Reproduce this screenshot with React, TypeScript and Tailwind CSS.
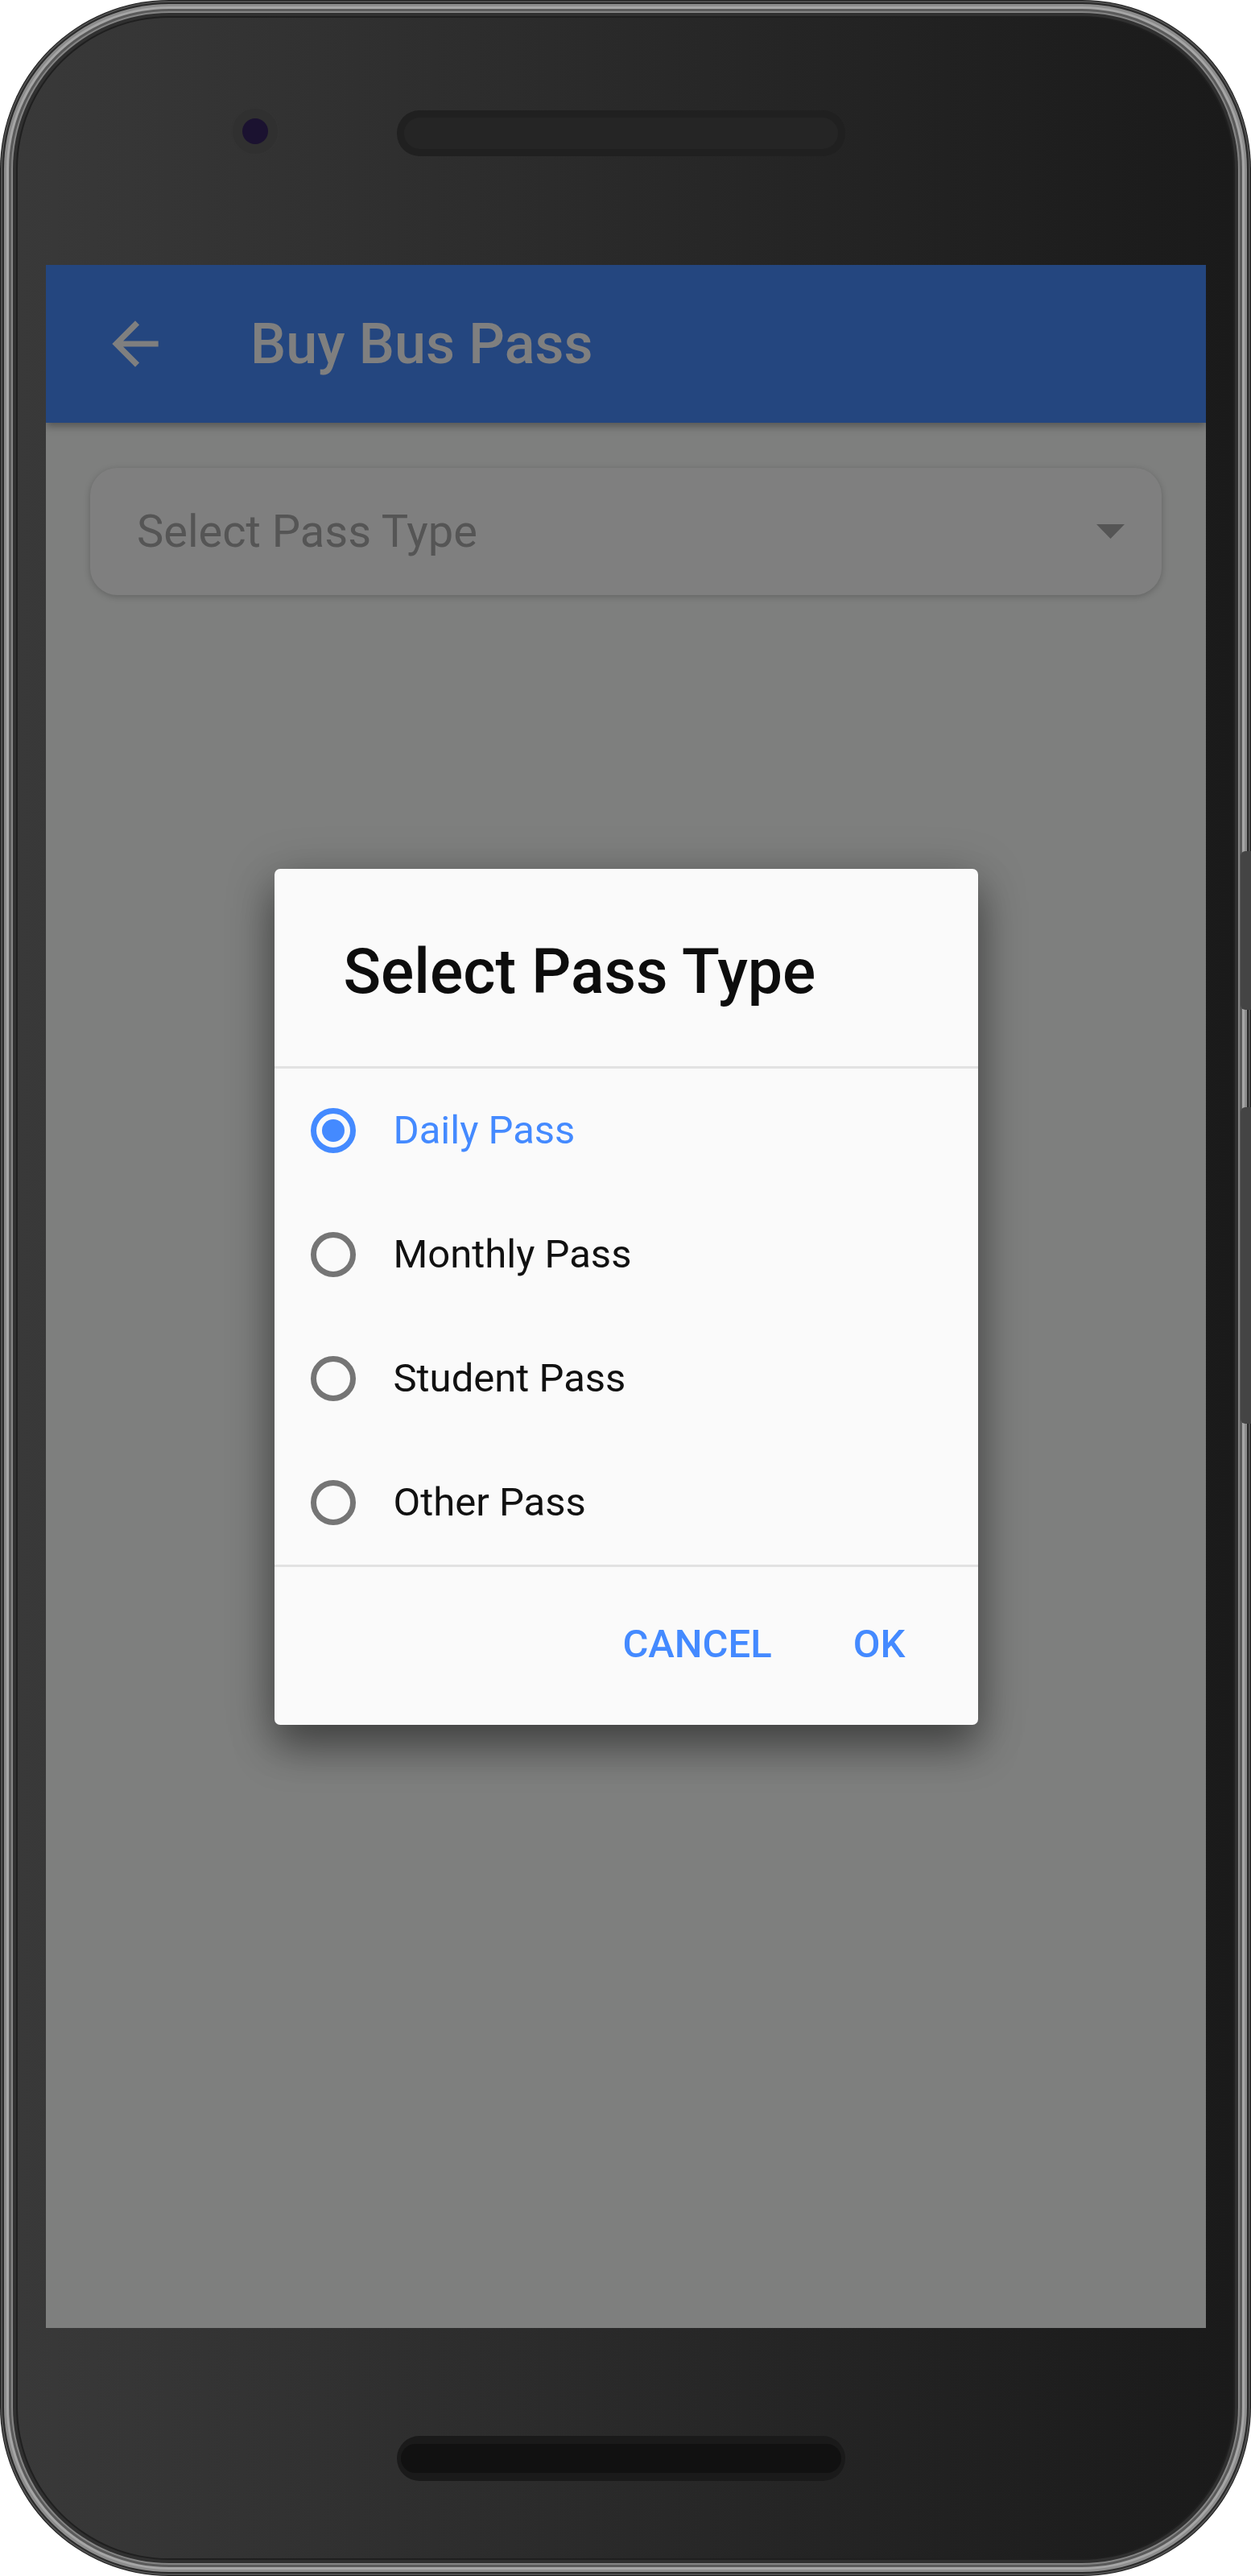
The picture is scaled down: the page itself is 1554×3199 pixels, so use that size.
import React from "react";

const passes = ["Daily Pass", "Monthly Pass", "Student Pass", "Other Pass"];

function Radio({ checked }: { checked: boolean }) {
  return (
    <div
      className={
        checked
          ? "w-[56px] h-[56px] rounded-full border-[7px] border-[#448aff] flex items-center justify-center shrink-0"
          : "w-[56px] h-[56px] rounded-full border-[7px] border-[#757575] flex items-center justify-center shrink-0"
      }
    >
      {checked ? <div className="w-[28px] h-[28px] rounded-full bg-[#448aff]" /> : null}
    </div>
  );
}

function Dialog() {
  return (
    <div className="w-[874px] h-[1063px] bg-[#fafafa] rounded-[7px] flex flex-col shadow-[0_30px_50px_rgba(0,0,0,0.35),0_10px_60px_rgba(0,0,0,0.25)] overflow-hidden">
      <div className="h-[245px] shrink-0 pl-[86px] pt-[90px]">
        <div className="text-[77px] leading-none font-medium text-[#0d0d0d]">Select Pass Type</div>
      </div>
      <div className="h-[3px] bg-[#e2e2e2] shrink-0" />
      <div className="flex flex-col shrink-0">
        {passes.map((p, i) => (
          <div key={p} className="h-[154px] flex items-center pl-[45px]">
            <Radio checked={i === 0} />
            <span
              className={
                i === 0
                  ? "ml-[47px] text-[49px] leading-none text-[#448aff]"
                  : "ml-[47px] text-[49px] leading-none text-[#111111]"
              }
            >
              {p}
            </span>
          </div>
        ))}
      </div>
      <div className="h-[3px] bg-[#e2e2e2] shrink-0" />
      <div className="flex-1 flex items-center justify-end pr-[90px] pb-[5px] gap-[101px]">
        <span className="text-[49px] leading-none font-medium text-[#448aff]">CANCEL</span>
        <span className="text-[49px] leading-none font-medium text-[#448aff]">OK</span>
      </div>
    </div>
  );
}

function Screen() {
  return (
    <div className="relative w-[1441px] h-[2562px] ml-[35px] bg-[#fcfefc] flex flex-col overflow-hidden shrink-0">
      <div className="relative z-10 h-[196px] shrink-0 bg-[#488cfe] flex items-center shadow-[0_4px_10px_rgba(0,0,0,0.35)]">
        <svg className="ml-[68px] w-[86px] h-[86px]" viewBox="0 0 24 24" fill="#ffffff">
          <path d="M20 11H7.83l5.59-5.59L12 4l-8 8 8 8 1.41-1.41L7.83 13H20v-2z" />
        </svg>
        <span className="ml-[100px] text-[70px] leading-none font-medium text-white">Buy Bus Pass</span>
      </div>
      <div className="flex-1 px-[55px] pt-[56px]">
        <div className="h-[158px] bg-white rounded-[34px] shadow-[0_2px_8px_rgba(0,0,0,0.22)] flex items-center justify-between pl-[58px] pr-[46px]">
          <span className="text-[56px] leading-none text-[#aaaaaa]">Select Pass Type</span>
          <svg className="w-[35px] h-[18px]" viewBox="0 0 35 18">
            <polygon points="0,0 35,0 17.5,18" fill="#aaaaaa" />
          </svg>
        </div>
      </div>
      <div className="absolute inset-0 z-20 bg-black/50 flex items-center justify-center">
        <Dialog />
      </div>
    </div>
  );
}

export default function App() {
  return (
    <div className="w-[1554px] h-[3199px] bg-white relative" style={{ fontFamily: "Roboto, 'Noto Sans', sans-serif" }}>
      <div className="w-full h-full rounded-[210px] bg-[#1e1e1e] p-[1px]">
        <div className="w-full h-full rounded-[209px] bg-[#505050] p-[2px]">
          <div className="w-full h-full rounded-[207px] bg-[#2a2a2a] p-[2px]">
            <div className="w-full h-full rounded-[205px] bg-[#8c8c8c] p-[3px]">
              <div className="w-full h-full rounded-[202px] bg-[#a6a6a6] p-[3px]">
                <div className="w-full h-full rounded-[199px] bg-[#5a5a5a] p-[3px]">
                  <div className="w-full h-full rounded-[196px] bg-[#858585] p-[2px]">
                    <div className="w-full h-full rounded-[194px] bg-[#303030] p-[4px]">
                      <div className="w-full h-full rounded-[190px] bg-[#1f1f1f] p-[2px]">
                        <div className="w-full h-full rounded-[188px] bg-linear-to-r from-[#393939] to-[#1a1a1a] flex flex-col overflow-hidden">
                          <div className="h-[307px] shrink-0 flex items-start pt-[111px] pl-[265px]">
                            <div className="w-[60px] h-[60px] rounded-full bg-[#303030] border-[2px] border-[#333333] flex items-center justify-center shrink-0">
                              <div className="w-[32px] h-[32px] rounded-full bg-[#1b1230]" />
                            </div>
                            <div className="ml-[146px] mt-[4px] w-[557px] h-[57px] rounded-[28px] bg-[#202020] p-[9px] shrink-0">
                              <div className="w-full h-full rounded-[20px] bg-[#252525]" />
                            </div>
                          </div>
                          <Screen />
                          <div className="h-[286px] shrink-0 flex justify-start pt-[134px] pl-[471px]">
                            <div className="w-[557px] h-[56px] rounded-[28px] bg-[#1a1a1a] px-[5px] py-[10px] shrink-0">
                              <div className="w-full h-full rounded-[18px] bg-[#111111]" />
                            </div>
                          </div>
                        </div>
                      </div>
                    </div>
                  </div>
                </div>
              </div>
            </div>
          </div>
        </div>
      </div>
      <div className="absolute right-0 top-[1057px] w-[13px] h-[197px] rounded-l-[6px] bg-[#444444]" />
      <div className="absolute right-0 top-[1375px] w-[13px] h-[393px] rounded-l-[6px] bg-[#444444]" />
    </div>
  );
}
